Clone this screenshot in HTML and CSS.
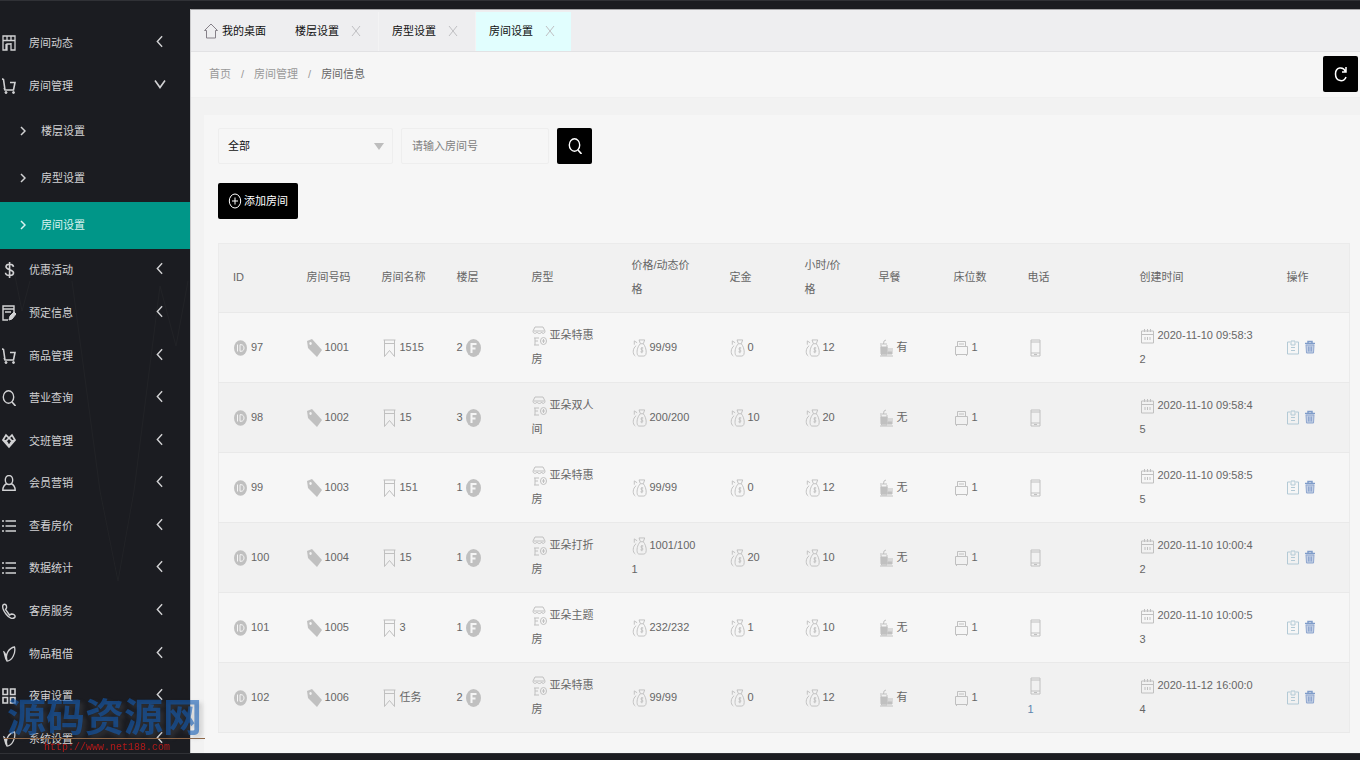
FILE: index.html
```html
<!DOCTYPE html>
<html lang="zh-CN">
<head>
<meta charset="utf-8">
<title>房间设置</title>
<link rel="stylesheet" href="styles.css">
</head>
<body>
<svg class="sprite" aria-hidden="true">
  <symbol id="left" viewBox="0 0 8 14"><path d="M7 1 1.500 7 7 13"/></symbol>
  <symbol id="down" viewBox="0 0 12 8"><path d="M1 0 6 7 11 0"/></symbol>
  <symbol id="right" viewBox="0 0 6 10"><path d="M1 1 5 5 1 9"/></symbol>
  <symbol id="building" viewBox="0 0 14 16"><path d="M1 1h12v14H9V9H5v6H1zM1 5.500h12M5 1v4.500M9 1v4.500M9 8v7M4 9v6" stroke-width="1.300"/></symbol>
  <symbol id="cart" viewBox="0 0 14 16"><path d="M0 .8 1.500 1.500 3 12h8.500L13 4.500H8M3 12l-1-2" stroke-width="1.600"/><circle cx="4" cy="14.500" r="1" fill="currentColor"/><circle cx="11.500" cy="14.500" r="1" fill="currentColor"/></symbol>
  <symbol id="dollar" viewBox="0 0 14 16"><path d="M11.500 4.800C11 1.300 4 1.500 4 4.800c0 3.400 7.500 2.400 7.500 6 0 3.700-8 3.700-8 0M7.600 0v16" stroke-width="1.600"/></symbol>
  <symbol id="form" viewBox="0 0 14 16"><path d="M6 15H1V1h11v7M1 4h11M3 7h6" stroke-width="1.400"/><path d="m7 15 1-4 4-4 2 2-4 5z" fill="currentColor"/></symbol>
  <symbol id="search" viewBox="0 0 14 16"><ellipse cx="6.500" cy="7" rx="5.200" ry="6.200" stroke-width="1.400"/><path d="m10 12 3.500 4" stroke-width="1.600"/></symbol>
  <symbol id="team" viewBox="0 0 14 16"><path d="M1 7 4 2l3 3 3-3 3 5-6 7zM1 7l3 1 3-3 3 3 3-1M4 8l3 5 3-5" stroke-width="1.700"/></symbol>
  <symbol id="user" viewBox="0 0 14 16"><ellipse cx="7" cy="5" rx="3.700" ry="4.500" stroke-width="1.400"/><path d="M5 8.500C2 10 .8 12 .8 15.300h12.400c0-3.300-1.200-5.300-4.200-6.800" stroke-width="1.400"/></symbol>
  <symbol id="list" viewBox="0 0 14 16"><path d="M3.500 3H14M3.500 8H14M3.500 13H14M0 3h2M0 8h2M0 13h2" stroke-width="1.400"/></symbol>
  <symbol id="phone" viewBox="0 0 14 16"><path d="M1 2c2-2 4 0 3.500 3L3.500 6.500 7.500 12l2-1c2 0 4 1 3.500 3-2 3-6 1-9-3S0 4.500 1 2z" stroke-width="1.400"/></symbol>
  <symbol id="leaf" viewBox="0 0 14 16"><path d="M2 6c2 1 2 6 3 8C3 8 7 2 12.500 1 14 7 10 15 5 15 3 13 3 9 2 6z" stroke-width="1.300"/></symbol>
  <symbol id="apps" viewBox="0 0 14 16"><path d="M1 1h4.500v5.500H1zM8.500 1H13v5.500H8.500zM1 9.500h4.500V15H1zM8.500 9.500H13V15H8.500z" stroke-width="1.600"/></symbol>
  <symbol id="home" viewBox="0 0 14 16"><path d="M.5 7.500 7 1l6.500 6.500h-2V15h-9V7.500z"/></symbol>
  <symbol id="close" viewBox="0 0 10 12"><path d="m1 1 8 10M9 1 1 11"/></symbol>
  <symbol id="refresh" viewBox="0 0 14 16"><path d="M12 1v5H8M11.500 5.500C9 0 1.500 1 1.500 8c0 8 9 8.500 10.500 3" stroke-width="1.500"/></symbol>
  <symbol id="plus" viewBox="0 0 14 16"><ellipse cx="7" cy="8" rx="5.700" ry="7"/><path d="M7 4.500v7M4 8h6"/></symbol>
  <symbol id="idc" viewBox="0 0 15 18"><ellipse cx="7.500" cy="9" rx="6.500" ry="7.800" fill="currentColor" stroke="none"/><path d="M4.500 5.500v7M7 5.700v6.600h1c4 0 4-6.600 0-6.600z" stroke="#f5f5f5"/></symbol>
  <symbol id="tag" viewBox="0 0 15 18"><path d="M0 2 5 0l10 11-5 7L1 9zM3.500 3a1.200 1.500 0 1 0 .1 0z" fill="currentColor" fill-rule="evenodd" stroke="none"/></symbol>
  <symbol id="mark" viewBox="0 0 15 18"><path d="M1.500 1h12M2.500 4.500h10M2.500 1v16.500l5-6 5 6V1"/></symbol>
  <symbol id="floor" viewBox="0 0 15 18"><ellipse cx="7.500" cy="9" rx="7.500" ry="9" fill="currentColor" stroke="none"/><path d="M5.500 14V5h5M5.500 9.500h4" stroke="#f5f5f5" stroke-width="2"/></symbol>
  <symbol id="type" viewBox="0 0 15 20"><path d="M3 1h8l2 4c0 3-3 3-3.500 1-.5 2-3.500 2-4.500 0C4 8 1 8 1 5zM2 5h10M2 12h5M3 12v7M2 19h5M3 15h3"/><ellipse cx="11.500" cy="15" rx="3" ry="3.500"/><path d="M11.500 13v4M10 15h3"/></symbol>
  <symbol id="money" viewBox="0 0 15 19"><path d="M7 1h6l-1.500 4h-3zM8.500 5C4 9 4 18 7 18h5c4 0 3-9-.5-13M5 4 2 2v4M4 7c-4 3-4 9-1 11M11.500 9.500c-3-1-3 2-1.500 2s2 3-1.500 2M10 8.500v6.500"/></symbol>
  <symbol id="food" viewBox="0 0 15 18"><path d="M1 5h7M4.500 5 5 2l2-1M1 17h13M2 6l.5 10H8V6M9 10h5M9 12h5"/><path d="M2 8h6v7H2zM9 13h4v2H9z" fill="currentColor"/></symbol>
  <symbol id="bed" viewBox="0 0 15 18"><path d="M3.500 7V2.500h8V7M5 5h5M1.500 7.500h12v8h-12zM2.500 15v2M12.500 15v2"/></symbol>
  <symbol id="mobile" viewBox="0 0 15 18"><path d="M3 1h9v16H3zM3 3h9M3 14h9M6 15.500h3"/></symbol>
  <symbol id="date" viewBox="0 0 15 16"><path d="M1.500 3h12v12h-12zM1.500 6.500h12M4.500 1v3M7.500 1v3M10.500 1v3M5 9v3M7.500 9v3M10 9v3"/></symbol>
  <symbol id="edit" viewBox="0 0 12 15"><path d="M3 2H.5v12h11V2H9M4 1h4v4H4zM4 7.500h4M4 10.500h4" stroke="#b3cad6"/></symbol>
  <symbol id="trash" viewBox="0 0 12 15"><path d="M1 3.500h10M4 3V1.500h4V3" stroke="#7f9cc9" stroke-width="1.500"/><path d="M2 5h8l-.5 8h-7zM4.500 6.500v5M6 6.500v5M7.500 6.500v5" fill="#c2cfe4" stroke="#8fa6cf"/></symbol>
</svg>

<div class="app">
  <aside class="side">
    <svg class="wave" viewBox="0 0 190 340" preserveAspectRatio="none" aria-hidden="true"><path d="M12 20 22 70 30 40M72 40 100 250 118 340 134 250 160 45 176 105 188 40"/></svg>
    <nav class="nav">
      <a class="item" href="#"><svg class="ico"><use href="#building"/></svg>房间动态<svg class="arrow"><use href="#left"/></svg></a>
      <a class="item" href="#"><svg class="ico"><use href="#cart"/></svg>房间管理<svg class="arrow open"><use href="#down"/></svg></a>
      <a class="item sub" href="#"><svg class="mini"><use href="#right"/></svg>楼层设置</a>
      <a class="item sub" href="#"><svg class="mini"><use href="#right"/></svg>房型设置</a>
      <a class="item sub active" href="#"><svg class="mini"><use href="#right"/></svg>房间设置</a>
      <a class="item" href="#"><svg class="ico"><use href="#dollar"/></svg>优惠活动<svg class="arrow"><use href="#left"/></svg></a>
      <a class="item" href="#"><svg class="ico"><use href="#form"/></svg>预定信息<svg class="arrow"><use href="#left"/></svg></a>
      <a class="item" href="#"><svg class="ico"><use href="#cart"/></svg>商品管理<svg class="arrow"><use href="#left"/></svg></a>
      <a class="item" href="#"><svg class="ico"><use href="#search"/></svg>营业查询<svg class="arrow"><use href="#left"/></svg></a>
      <a class="item" href="#"><svg class="ico"><use href="#team"/></svg>交班管理<svg class="arrow"><use href="#left"/></svg></a>
      <a class="item" href="#"><svg class="ico"><use href="#user"/></svg>会员营销<svg class="arrow"><use href="#left"/></svg></a>
      <a class="item" href="#"><svg class="ico"><use href="#list"/></svg>查看房价<svg class="arrow"><use href="#left"/></svg></a>
      <a class="item" href="#"><svg class="ico"><use href="#list"/></svg>数据统计<svg class="arrow"><use href="#left"/></svg></a>
      <a class="item" href="#"><svg class="ico"><use href="#phone"/></svg>客房服务<svg class="arrow"><use href="#left"/></svg></a>
      <a class="item" href="#"><svg class="ico"><use href="#leaf"/></svg>物品租借<svg class="arrow"><use href="#left"/></svg></a>
      <a class="item" href="#"><svg class="ico"><use href="#apps"/></svg>夜审设置<svg class="arrow"><use href="#left"/></svg></a>
      <a class="item" href="#"><svg class="ico"><use href="#leaf"/></svg>系统设置<svg class="arrow"><use href="#left"/></svg></a>
    </nav>
  </aside>

  <main class="main">
    <div class="tabs">
      <a class="home" href="#"><svg class="ico"><use href="#home"/></svg>我的桌面</a>
      <a class="tab" href="#">楼层设置<svg class="x"><use href="#close"/></svg></a>
      <a class="tab" href="#">房型设置<svg class="x"><use href="#close"/></svg></a>
      <a class="tab current" href="#">房间设置<svg class="x"><use href="#close"/></svg></a>
    </div>
    <div class="crumbs">
      <a href="#">首页</a><span>/</span><a href="#">房间管理</a><span>/</span><b>房间信息</b>
      <button class="btn square refresh" aria-label="刷新"><svg class="ico"><use href="#refresh"/></svg></button>
    </div>
    <section class="panel">
      <form class="filters">
        <div class="select"><select aria-label="房型"><option>全部</option></select></div>
        <input class="field" type="text" placeholder="请输入房间号" aria-label="房间号">
        <button class="btn square" type="button" aria-label="搜索"><svg class="ico"><use href="#search"/></svg></button>
      </form>
      <button class="btn add" type="button"><svg class="ico"><use href="#plus"/></svg>添加房间</button>
      <table class="rooms">
        <colgroup><col class="w0"><col class="w1"><col class="w1"><col class="w1"><col class="w2"><col class="w3"><col class="w1"><col class="w0"><col class="w1"><col class="w0"><col class="w4"><col class="w5"><col class="w6"></colgroup>
        <thead><tr><th>ID</th><th>房间号码</th><th>房间名称</th><th>楼层</th><th>房型</th><th>价格/动态价格</th><th>定金</th><th>小时/价格</th><th>早餐</th><th>床位数</th><th>电话</th><th>创建时间</th><th>操作</th></tr></thead>
        <tbody>
          <tr><td><svg><use href="#idc"/></svg>97</td><td><svg><use href="#tag"/></svg>1001</td><td><svg><use href="#mark"/></svg>1515</td><td>2<svg class="after"><use href="#floor"/></svg></td><td><svg class="tall"><use href="#type"/></svg>亚朵特惠房</td><td><svg><use href="#money"/></svg>99/99</td><td><svg><use href="#money"/></svg>0</td><td><svg><use href="#money"/></svg>12</td><td><svg><use href="#food"/></svg>有</td><td><svg><use href="#bed"/></svg>1</td><td><svg><use href="#mobile"/></svg></td><td><svg><use href="#date"/></svg>2020-11-10 09:58:32</td><td class="ops"><a href="#" aria-label="编辑"><svg><use href="#edit"/></svg></a><a href="#" aria-label="删除"><svg><use href="#trash"/></svg></a></td></tr>
          <tr><td><svg><use href="#idc"/></svg>98</td><td><svg><use href="#tag"/></svg>1002</td><td><svg><use href="#mark"/></svg>15</td><td>3<svg class="after"><use href="#floor"/></svg></td><td><svg class="tall"><use href="#type"/></svg>亚朵双人间</td><td><svg><use href="#money"/></svg>200/200</td><td><svg><use href="#money"/></svg>10</td><td><svg><use href="#money"/></svg>20</td><td><svg><use href="#food"/></svg>无</td><td><svg><use href="#bed"/></svg>1</td><td><svg><use href="#mobile"/></svg></td><td><svg><use href="#date"/></svg>2020-11-10 09:58:45</td><td class="ops"><a href="#" aria-label="编辑"><svg><use href="#edit"/></svg></a><a href="#" aria-label="删除"><svg><use href="#trash"/></svg></a></td></tr>
          <tr><td><svg><use href="#idc"/></svg>99</td><td><svg><use href="#tag"/></svg>1003</td><td><svg><use href="#mark"/></svg>151</td><td>1<svg class="after"><use href="#floor"/></svg></td><td><svg class="tall"><use href="#type"/></svg>亚朵特惠房</td><td><svg><use href="#money"/></svg>99/99</td><td><svg><use href="#money"/></svg>0</td><td><svg><use href="#money"/></svg>12</td><td><svg><use href="#food"/></svg>无</td><td><svg><use href="#bed"/></svg>1</td><td><svg><use href="#mobile"/></svg></td><td><svg><use href="#date"/></svg>2020-11-10 09:58:55</td><td class="ops"><a href="#" aria-label="编辑"><svg><use href="#edit"/></svg></a><a href="#" aria-label="删除"><svg><use href="#trash"/></svg></a></td></tr>
          <tr><td><svg><use href="#idc"/></svg>100</td><td><svg><use href="#tag"/></svg>1004</td><td><svg><use href="#mark"/></svg>15</td><td>1<svg class="after"><use href="#floor"/></svg></td><td><svg class="tall"><use href="#type"/></svg>亚朵打折房</td><td><svg><use href="#money"/></svg>1001/1001</td><td><svg><use href="#money"/></svg>20</td><td><svg><use href="#money"/></svg>10</td><td><svg><use href="#food"/></svg>无</td><td><svg><use href="#bed"/></svg>1</td><td><svg><use href="#mobile"/></svg></td><td><svg><use href="#date"/></svg>2020-11-10 10:00:42</td><td class="ops"><a href="#" aria-label="编辑"><svg><use href="#edit"/></svg></a><a href="#" aria-label="删除"><svg><use href="#trash"/></svg></a></td></tr>
          <tr><td><svg><use href="#idc"/></svg>101</td><td><svg><use href="#tag"/></svg>1005</td><td><svg><use href="#mark"/></svg>3</td><td>1<svg class="after"><use href="#floor"/></svg></td><td><svg class="tall"><use href="#type"/></svg>亚朵主题房</td><td><svg><use href="#money"/></svg>232/232</td><td><svg><use href="#money"/></svg>1</td><td><svg><use href="#money"/></svg>10</td><td><svg><use href="#food"/></svg>无</td><td><svg><use href="#bed"/></svg>1</td><td><svg><use href="#mobile"/></svg></td><td><svg><use href="#date"/></svg>2020-11-10 10:00:53</td><td class="ops"><a href="#" aria-label="编辑"><svg><use href="#edit"/></svg></a><a href="#" aria-label="删除"><svg><use href="#trash"/></svg></a></td></tr>
          <tr><td><svg><use href="#idc"/></svg>102</td><td><svg><use href="#tag"/></svg>1006</td><td><svg><use href="#mark"/></svg>任务</td><td>2<svg class="after"><use href="#floor"/></svg></td><td><svg class="tall"><use href="#type"/></svg>亚朵特惠房</td><td><svg><use href="#money"/></svg>99/99</td><td><svg><use href="#money"/></svg>0</td><td><svg><use href="#money"/></svg>12</td><td><svg><use href="#food"/></svg>有</td><td><svg><use href="#bed"/></svg>1</td><td><svg><use href="#mobile"/></svg><br><a class="tel" href="#">1</a></td><td><svg><use href="#date"/></svg>2020-11-12 16:00:04</td><td class="ops"><a href="#" aria-label="编辑"><svg><use href="#edit"/></svg></a><a href="#" aria-label="删除"><svg><use href="#trash"/></svg></a></td></tr>
        </tbody>
      </table>
    </section>
  </main>
</div>
<div class="edge"></div>
<div class="stamp"><div class="stamp-name">源码资源网</div><div class="stamp-url">http://www.net188.com</div></div>
</body>
</html>
```
FILE: styles.css
```css
* { box-sizing: border-box; }
body {
  margin: 0;
  background: #1b1c21;
  color: #666;
  font: 11px/24px "Liberation Sans", "Noto Sans CJK SC", sans-serif;
  overflow: hidden;
}
a { color: inherit; text-decoration: none; }
svg { fill: none; stroke: currentColor; flex: none; }
.sprite { position: absolute; width: 0; height: 0; }
.app {
  display: grid;
  grid-template-columns: 190px 1fr;
  height: 100vh;
  border-top: 1px solid #303136;
}

.side { position: relative; color: #d2d2d4; }
.wave { position: absolute; left: 0; top: 240px; width: 100%; height: 340px; color: #222327; }
.nav { position: relative; display: flex; flex-direction: column; height: 100%; padding-top: 21px; }
.item { flex: 9 1 0; display: flex; align-items: center; gap: 13px; padding: 0 27px 0 2px; }
.ico { width: 14px; height: 16px; }
.arrow { width: 7px; height: 13px; margin: 0 0 3px auto; stroke-width: 1.6px; }
.arrow.open { width: 12px; height: 9px; margin-right: -3px; }
.sub { flex-grow: 10; gap: 15px; padding-left: 20px; }
.mini { width: 6px; height: 10px; stroke-width: 1.5px; }
.active { background: #009688; color: #d9f3f0; }

.main { display: flex; flex-direction: column; margin: 8px 0 7px; background: #f2f2f2; border-left: 1px solid #c9c9cb; border-top: 1px solid #a5a5a8; min-width: 0; }
.tabs { display: flex; height: 42px; padding-top: 2px; background: #eeeef0; border-bottom: 1px solid #e2e2e4; color: #111; }
.home, .tab { display: flex; align-items: center; padding-bottom: 2px; }
.home { gap: 4px; width: 91px; padding-left: 13px; }
.home .ico { color: #858088; }
.tab { gap: 12px; width: 97px; padding-left: 13px; border-right: 1px solid #f3f3f4; }
.x { width: 10px; height: 12px; color: #bfbfc2; }
.current { background: #e1fefe; width: 95px; border: 0; }
.crumbs { display: flex; align-items: center; gap: 10px; height: 46px; padding: 0 2px 2px 18px; background: #f6f6f6; border-bottom: 1px solid #f0f0f0; color: #999; }
.crumbs b { color: #666; font-weight: normal; }
.refresh { margin-left: auto; }

.btn { display: flex; align-items: center; justify-content: center; height: 36px; padding: 0; border: 0; border-radius: 2px; background: #000; color: #fff; font: inherit; }
.square { width: 35px; }
.add { gap: 2px; width: 80px; margin: 19px 0 24px; }

.panel { flex: 1; margin: 17px 0 0 13px; padding: 13px 11px 0 14px; background: #f6f6f6; }
.filters { display: flex; gap: 8px; }
.select { position: relative; width: 175px; }
.select::after { content: ""; position: absolute; right: 9px; top: 15px; border: 5px solid transparent; border-top: 7px solid #bdbdbd; border-bottom: 0; pointer-events: none; }
.select select, .field { width: 100%; height: 36px; padding: 0 10px; appearance: none; border: 1px solid #eee; border-radius: 2px; background: #f6f6f6; color: #111; font: inherit; }
.select select { padding-left: 9px; }
.field { width: 148px; }
.field::placeholder { color: #808080; opacity: 1; }

.rooms { width: 100%; table-layout: fixed; border-collapse: collapse; border: 1px solid #ebebeb; }
.rooms tr { height: 70px; border-bottom: 1px solid #e9e9e9; }
.rooms thead tr { height: 69px; }
.rooms thead tr, .rooms tbody tr:nth-child(even) { background: #f1f1f1; }
.rooms th, .rooms td { padding: 0 15px 2px 14px; text-align: left; font-weight: normal; word-break: break-all; }
.rooms td svg { width: 15px; height: 18px; margin-right: 3px; vertical-align: middle; color: #c0c0c0; }
.rooms td .after { margin: 0 0 0 3px; }
.rooms td .tall { height: 20px; }
.rooms .ops { padding-right: 0; }
.rooms .ops svg { width: 12px; height: 15px; margin-right: 5px; }
.rooms .tel { color: #5f86ad; }
.w0 { width: 74px; }
.w1 { width: 75px; }
.w2 { width: 100px; }
.w3 { width: 98px; }
.w4 { width: 112px; }
.w5 { width: 147px; }
.w6 { width: 77px; }

.edge { position: fixed; left: 0; right: 0; bottom: 0; height: 7px; background: #1b1c21; border-top: 1px solid #303136; }
.stamp { position: fixed; left: 4px; bottom: 4px; width: 201px; pointer-events: none; }
.stamp-name { padding-left: 3px; border-bottom: 1px solid #8f6848; color: rgba(18, 92, 180, .6); font: bold 39px/48px "Noto Sans CJK SC", sans-serif; text-shadow: 3px 3px 4px rgba(110, 110, 110, .25); }
.stamp-url { padding-left: 40px; color: #b51a1a; font: 10px/17px "Liberation Mono", monospace; }
```
